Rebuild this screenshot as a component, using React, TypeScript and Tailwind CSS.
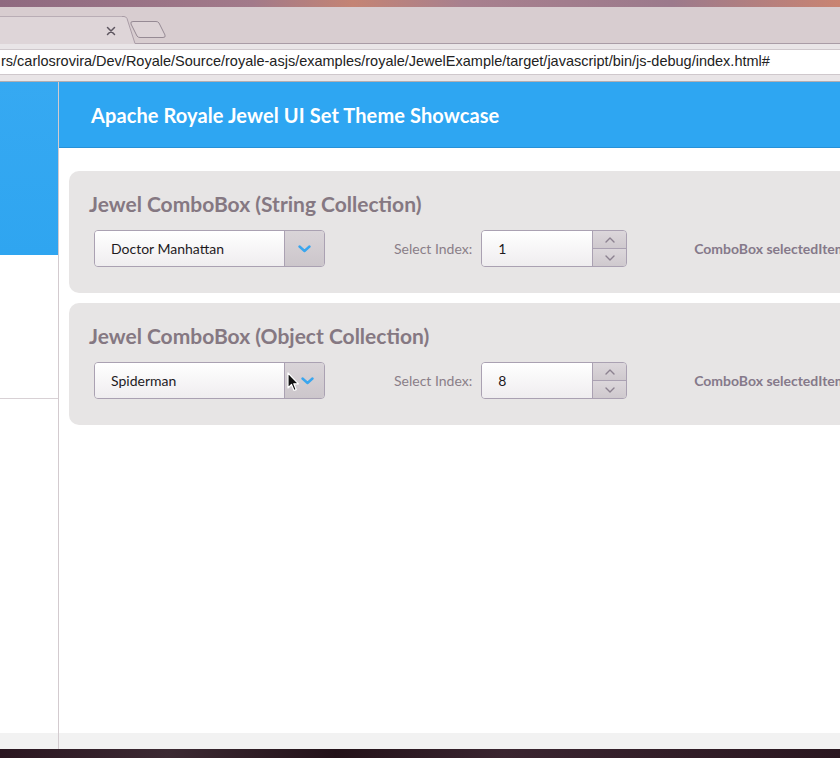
import React from 'react'

const lato = { fontFamily: 'Lato, "Open Sans", sans-serif' }

function Chevron({ className }: { className?: string }) {
  return (
    <svg width="13" height="8" viewBox="0 0 13 8" className={className}>
      <path d="M1.5 1.5 L6.5 6 L11.5 1.5" fill="none" stroke="#3aa6ee" strokeWidth="2.4" strokeLinecap="round" strokeLinejoin="round" />
    </svg>
  )
}

function SmallArrow({ up }: { up?: boolean }) {
  return (
    <svg width="10" height="6" viewBox="0 0 10 6">
      <path
        d={up ? 'M1 5 L5 1 L9 5' : 'M1 1 L5 5 L9 1'}
        fill="none"
        stroke="#8c8290"
        strokeWidth="1.4"
        strokeLinecap="round"
        strokeLinejoin="round"
      />
    </svg>
  )
}

function Cursor() {
  return (
    <svg width="13" height="20" viewBox="0 0 13 20" className="absolute left-[2px] top-[9px]">
      <path d="M1 1 L1 16 L4.5 12.5 L7 18.5 L9.2 17.6 L6.8 11.8 L11.5 11.8 Z" fill="#111" stroke="#fff" strokeWidth="1.2" strokeLinejoin="round" />
    </svg>
  )
}

function ComboBox({ value, cursor }: { value: string; cursor?: boolean }) {
  return (
    <div className="flex h-[37px] w-[231px] rounded-[4px] border border-[#aaa1b2] overflow-hidden">
      <div className="flex-1 flex items-center pl-[16px] text-[14px] text-[#1e1a1e] bg-[linear-gradient(#ffffff,#efedef)]">
        {value}
      </div>
      <div className="relative w-[40px] flex items-center justify-center border-l border-[#aaa1b2] bg-[linear-gradient(#d9d4d8,#ccc6cb)]">
        <Chevron className={cursor ? 'ml-[6px]' : ''} />
        {cursor && <Cursor />}
      </div>
    </div>
  )
}

function NumericStepper({ value }: { value: string }) {
  return (
    <div className="flex h-[37px] w-[146px] rounded-[4px] border border-[#aaa1b2] overflow-hidden">
      <div className="flex-1 flex items-center pl-[16px] text-[14px] text-[#1e1a1e] bg-[linear-gradient(#ffffff,#efedef)]">
        {value}
      </div>
      <div className="w-[34px] flex flex-col border-l border-[#aaa1b2]">
        <div className="flex-1 flex items-center justify-center bg-[linear-gradient(#dcd7db,#cfc9ce)] border-b border-[#aaa1b2]">
          <SmallArrow up />
        </div>
        <div className="flex-1 flex items-center justify-center bg-[linear-gradient(#dcd7db,#cfc9ce)]">
          <SmallArrow />
        </div>
      </div>
    </div>
  )
}

function ComboCard({ title, value, index, cursor }: { title: string; value: string; index: string; cursor?: boolean }) {
  return (
    <div className="w-[800px] h-[122px] rounded-l-[10px] bg-[#e7e5e5] pl-[20px] pt-[19px]">
      <h2 className="text-[21px] font-bold text-[#857882] leading-[28px]">{title}</h2>
      <div className="flex items-center mt-[12px] pl-[5px]">
        <ComboBox value={value} cursor={cursor} />
        <span className="ml-[69px] text-[14px] text-[#8a7e88]">Select Index:</span>
        <div className="ml-[9px]">
          <NumericStepper value={index} />
        </div>
        <span className="ml-[67px] text-[14px] font-bold text-[#85798a] whitespace-nowrap">ComboBox selectedItem:</span>
      </div>
    </div>
  )
}

export default function App() {
  return (
    <div className="w-[840px] h-[758px] overflow-hidden flex flex-col bg-white" style={lato}>
      {/* desktop wallpaper strip */}
      <div className="h-[7px] shrink-0 bg-[linear-gradient(90deg,#8f6a80,#a27a8a_30%,#c48474_42%,#a8808e_55%,#9c7a8c_80%,#c98472)]" />

      {/* tab strip */}
      <div className="h-[37px] shrink-0 flex items-end bg-[#d8cdd0]">
        <div className="h-[28px] w-[122px] flex items-center justify-end pr-[6px] bg-[#ded5d8] border-t border-[#b9adb5]">
          <svg width="10" height="10" viewBox="0 0 10 10">
            <path d="M1.5 1.5 L8.5 8.5 M8.5 1.5 L1.5 8.5" stroke="#5e5660" strokeWidth="1.5" strokeLinecap="round" />
          </svg>
        </div>
        <svg width="14" height="28" viewBox="0 0 14 28" className="shrink-0">
          <path d="M0 0.5 L2 0.5 Q4 0.5 5 2.5 L13 27 L14 27 L14 28 L0 28 Z" fill="#ded5d8" />
          <path d="M0 0.5 L2 0.5 Q4 0.5 5 2.5 L13 27.5 L14 27.5" fill="none" stroke="#a99ca6" strokeWidth="1" />
        </svg>
        <div className="flex-1 h-[28px] flex flex-col justify-end">
          <svg width="40" height="20" viewBox="0 0 40 20" className="-ml-[6px] mb-[3px]">
            <path d="M3 1.5 L26 1.5 Q28 1.5 29 3 L35 15 Q36 17.5 33 17.5 L10 17.5 Q8 17.5 7 16 L1 4 Q0 1.5 3 1.5 Z" fill="#ddd3d6" stroke="#968a94" strokeWidth="1" />
          </svg>
          <div className="h-px bg-[#a99ca6]" />
        </div>
      </div>

      {/* toolbar / url bar */}
      <div className="h-[38px] shrink-0 bg-[#e9e5e7] border-b border-[#b2adb1] pt-[5px]">
        <div className="h-[26px] bg-white border-t border-b border-[#cfc8cc] flex items-center pl-[1px] text-[14.5px] text-[#222] whitespace-nowrap" style={{ fontFamily: '"Liberation Sans", Arial, sans-serif' }}>
          rs/carlosrovira/Dev/Royale/Source/royale-asjs/examples/royale/JewelExample/target/javascript/bin/js-debug/index.html#
        </div>
      </div>

      {/* page */}
      <div className="flex-1 flex min-h-0">
        <aside className="w-[59px] shrink-0 border-r border-[#d3cbcf] flex flex-col">
          <div className="h-[173px] bg-[linear-gradient(#36a9f2,#2fa5f0)]" />
          <div className="h-[144px] border-b border-[#d8d1d5]" />
          <div className="flex-1" />
          <div className="h-[16px] bg-[#f2f2f2]" />
        </aside>

        <main className="flex-1 flex flex-col min-w-0">
          <header className="h-[66px] shrink-0 bg-[#2ea6f2] border-b border-[#2791d8] flex items-center pl-[32px]">
            <h1 className="text-[20px] font-bold text-white tracking-[0.1px]">Apache Royale Jewel UI Set Theme Showcase</h1>
          </header>
          <div className="flex-1 flex flex-col gap-[10px] pl-[10px] pt-[23px]">
            <ComboCard title="Jewel ComboBox (String Collection)" value="Doctor Manhattan" index="1" />
            <ComboCard title="Jewel ComboBox (Object Collection)" value="Spiderman" index="8" cursor />
          </div>
          <div className="h-[16px] shrink-0 bg-[#f2f2f2]" />
        </main>
      </div>

      {/* desktop bottom */}
      <div className="h-[9px] shrink-0 bg-[linear-gradient(90deg,#2a1620,#3c2a33_20%,#231219_40%,#3a2530_60%,#2a1720)]" />
    </div>
  )
}
